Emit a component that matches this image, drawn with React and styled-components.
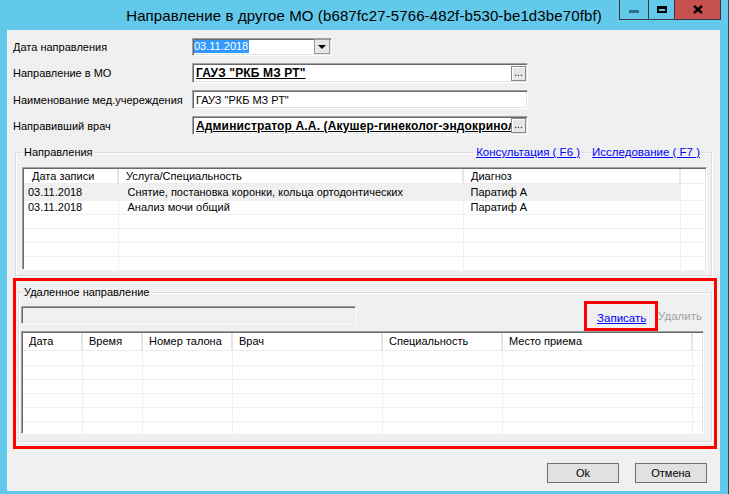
import React from 'react';
import styled, { createGlobalStyle } from 'styled-components';

const GlobalStyle = createGlobalStyle`
  html, body { margin: 0; padding: 0; background: #63c9eb; }
  body { font-family: "Liberation Sans", Arial, sans-serif; }
`;

// window chrome
const Window = styled.div`
  width: 729px;
  height: 494px;
  box-sizing: border-box;
  background: #63c9eb;
  border-right: 1px solid #2b4a57;
  display: flex;
  flex-direction: column;
`;

const TitleBar = styled.div`
  height: 30px;
  display: grid;
  grid-template-columns: 1fr auto 1fr;
  align-items: center;
`;

const Title = styled.div`
  grid-column: 2;
  font-size: 15px;
  letter-spacing: 0.12px;
  color: #000;
  white-space: nowrap;
  padding-top: 1px;
`;

const CaptionButtons = styled.div`
  grid-column: 3;
  justify-self: end;
  align-self: start;
  display: flex;
  height: 20px;
  margin-right: 7px;
  border: 1px solid #3a3a3a;
  border-top: none;
  box-sizing: border-box;
`;

const CapBtn = styled.div`
  width: ${p => p.$w}px;
  height: 100%;
  display: flex;
  align-items: center;
  justify-content: center;
  background: ${p => (p.$close ? '#c75050' : 'transparent')};
  border-left: ${p => (p.$first ? 'none' : '1px solid #3a3a3a')};
  box-sizing: border-box;
`;

const MinGlyph = styled.div`
  width: 10px;
  height: 3px;
  background: #2f6d88;
  margin-top: 4px;
`;

const MaxGlyph = styled.div`
  width: 10px;
  height: 7px;
  box-sizing: border-box;
  border: 2px solid #000;
  border-top-width: 3px;
`;

const Client = styled.div`
  margin: 0 8px 0 7px;
  height: 461px;
  background: #f0f0f0;
  display: flex;
  flex-direction: column;
  font-size: 11px;
  color: #000;
`;

// form rows
const Form = styled.div`
  display: flex;
  flex-direction: column;
  gap: 7px;
  padding: 7px 0 0 6px;
`;

const Row = styled.div`
  display: grid;
  grid-template-columns: 179px auto;
  align-items: center;
  height: ${p => p.$h}px;
`;

const Label = styled.div`
  white-space: nowrap;
`;

const Field = styled.div`
  width: ${p => p.$w}px;
  height: ${p => p.$h}px;
  box-sizing: border-box;
  background: ${p => (p.$disabled ? '#f0f0f0' : '#fff')};
  border: 1px solid;
  border-color: #a0a0a0 #fff #fff #a0a0a0;
  box-shadow: inset 1px 1px 0 #696969, inset -1px -1px 0 #e3e3e3;
  display: flex;
  align-items: center;
  padding-left: ${p => p.$pad ?? 3}px;
  margin-top: ${p => p.$mt || 0}px;
  overflow: hidden;
`;

const FieldText = styled.span`
  flex: 1;
  min-width: 0;
  white-space: nowrap;
  overflow: hidden;
  font-size: ${p => (p.$bold ? 12 : 11)}px;
  letter-spacing: ${p => (p.$bold ? 0.15 : 0)}px;
  font-weight: ${p => (p.$bold ? 'bold' : 'normal')};
  text-decoration: ${p => (p.$bold ? 'underline' : 'none')};
`;

const Selected = styled.span`
  background: #3399ff;
  color: #fff;
  line-height: 13px;
  padding-right: 1px;
`;

const Spacer = styled.div`
  flex: 1;
`;

const DropBtn = styled.div`
  width: 16px;
  height: 15px;
  box-sizing: border-box;
  background: #e6e6e6;
  border: 1px solid #9a9a9a;
  display: flex;
  align-items: center;
  justify-content: center;
  margin-right: 1px;
  &::after {
    content: '';
    border-left: 4px solid transparent;
    border-right: 4px solid transparent;
    border-top: 4px solid #000;
    margin-top: 1px;
  }
`;

const DotsBtn = styled.div`
  width: 15px;
  height: 15px;
  flex: none;
  box-sizing: border-box;
  background: #e6e6e6;
  border: 1px solid #8a8a8a;
  box-shadow: inset 1px 1px 0 #fff;
  font-size: 10px;
  line-height: 11px;
  text-align: center;
  margin-right: 1px;
  color: #000;
`;

// group boxes
const Group = styled.div`
  margin: ${p => p.$m};
  border: 1px solid #dcdcdc;
  box-shadow: inset 1px 1px 0 #fff, 1px 1px 0 #fff;
  display: flex;
  flex-direction: column;
  padding-bottom: ${p => p.$pb}px;
`;

const GroupHead = styled.div`
  display: flex;
  align-items: center;
  height: 14px;
  margin-top: -8px;
  padding: 0 ${p => p.$pr || 0}px 0 ${p => p.$pl}px;
`;

const Legend = styled.span`
  background: #f0f0f0;
  padding: 0 1px;
  white-space: nowrap;
`;

const LinkText = styled.span`
  background: #f0f0f0;
  font-size: 11.5px;
  padding: 0 ${p => p.$px ?? 1}px;
  margin-left: ${p => p.$ml || 0}px;
  color: ${p => (p.$disabled ? '#a0a0a0' : '#0000ff')};
  text-decoration: ${p => (p.$disabled ? 'none' : 'underline')};
  white-space: nowrap;
`;

// list views
const ListBox = styled.div`
  width: ${p => p.$w}px;
  height: 103px;
  box-sizing: border-box;
  margin: ${p => p.$m};
  background: #fff;
  border: 1px solid;
  border-color: #a0a0a0 #fff #fff #a0a0a0;
  box-shadow: inset 1px 1px 0 #696969, inset -1px -1px 0 #e3e3e3;
  padding: 1px;
  overflow: hidden;
`;

const Grid = styled.table`
  width: 100%;
  table-layout: fixed;
  border-collapse: collapse;
  font-size: 11px;
`;

const Col = styled.col`
  width: ${p => p.$w}px;
`;

const HeadRow = styled.tr`
  height: ${p => p.$h}px;
`;

const HeadCell = styled.th`
  font-weight: normal;
  text-align: left;
  padding: 0 0 0 ${p => p.$pl ?? 6}px;
  line-height: 12px;
  background: #fff;
  border-right: 2px solid #e5e5e5;
  border-bottom: 1px solid #ececec;
  white-space: nowrap;
  overflow: hidden;
  &:last-child { border-right: none; }
`;

const BodyRow = styled.tr`
  height: ${p => p.$h}px;
`;

const Cell = styled.td`
  padding: 0 0 0 ${p => p.$pl ?? 6}px;
  line-height: 12px;
  white-space: nowrap;
  overflow: hidden;
  border-right: 1px solid #f0f0f0;
  border-bottom: 1px solid #f0f0f0;
  background: ${p => (p.$sel ? '#f0f0f0' : '#fff')};
  &:last-child { border-right: none; }
`;

// highlighted area
const RedBox = styled.div`
  margin: 2px 0 0 6px;
  width: 704px;
  height: 171px;
  box-sizing: border-box;
  border: 3px solid #ff0000;
  display: flex;
  flex-direction: column;
`;

const Toolbar = styled.div`
  display: flex;
  align-items: flex-start;
  margin: 2px 9px 0 2px;
`;

const Actions = styled.div`
  margin-left: auto;
  display: flex;
  align-items: center;
`;

const Mark = styled.div`
  width: 74px;
  height: 30px;
  box-sizing: border-box;
  border: 3px solid #ff0000;
  display: flex;
  align-items: center;
  padding: 3px 0 0 10px;
`;

// bottom buttons
const Footer = styled.div`
  display: flex;
  justify-content: flex-end;
  gap: 16px;
  margin: 14px 13px 0 0;
`;

const Button = styled.div`
  width: 72px;
  height: 20px;
  box-sizing: border-box;
  background: #e1e1e1;
  border: 1px solid #707070;
  display: flex;
  align-items: center;
  justify-content: center;
`;

const directions = [
  { date: '03.11.2018', service: 'Снятие, постановка коронки, кольца ортодонтических', diag: 'Паратиф А' },
  { date: '03.11.2018', service: 'Анализ мочи общий', diag: 'Паратиф А' },
];

const App = () => {
  const rows1 = [17, 14, 14, 14, 14, 14];
  const rows2 = [15, 14, 14, 14, 14, 13];
  return (
    <Window>
      <GlobalStyle />
      <TitleBar>
        <Title>Направление в другое МО (b687fc27-5766-482f-b530-be1d3be70fbf)</Title>
        <CaptionButtons>
          <CapBtn $w={28} $first>
            <MinGlyph />
          </CapBtn>
          <CapBtn $w={26}>
            <MaxGlyph />
          </CapBtn>
          <CapBtn $w={46} $close>
            <svg width="10" height="9" viewBox="0 0 10 9">
              <path d="M1 1 L9 8 M9 1 L1 8" stroke="#000" strokeWidth="2.4" />
            </svg>
          </CapBtn>
        </CaptionButtons>
      </TitleBar>

      <Client>
        <Form>
          <Row $h={19}>
            <Label>Дата направления</Label>
            <Field $w={140} $h={18} $pad={1}>
              <Selected>03.11.2018</Selected>
              <Spacer />
              <DropBtn />
            </Field>
          </Row>
          <Row $h={20}>
            <Label>Направление в МО</Label>
            <Field $w={336} $h={20}>
              <FieldText $bold>ГАУЗ "РКБ МЗ РТ"</FieldText>
              <DotsBtn>...</DotsBtn>
            </Field>
          </Row>
          <Row $h={19}>
            <Label>Наименование мед.учереждения</Label>
            <Field $w={336} $h={19}>
              <FieldText>ГАУЗ "РКБ МЗ РТ"</FieldText>
            </Field>
          </Row>
          <Row $h={19}>
            <Label>Направивший врач</Label>
            <Field $w={336} $h={19}>
              <FieldText $bold>Администратор А.А. (Акушер-гинеколог-эндокринолог)</FieldText>
              <DotsBtn>...</DotsBtn>
            </Field>
          </Row>
        </Form>

        <Group $m="17px 8px 0 8px" $pb={5}>
          <GroupHead $pl={7} $pr={9}>
            <Legend>Направления</Legend>
            <Spacer />
            <LinkText $px={2}>Консультация ( F6 )</LinkText>
            <LinkText $px={2} $ml={8}>Исследование ( F7 )</LinkText>
          </GroupHead>
          <ListBox $w={685} $m="8px 0 0 6px">
            <Grid>
              <colgroup>
                <Col $w={94} />
                <Col $w={345} />
                <Col $w={217} />
                <Col />
              </colgroup>
              <thead>
                <HeadRow $h={14}>
                  <HeadCell $pl={8}>Дата записи</HeadCell>
                  <HeadCell $pl={7}>Услуга/Специальность</HeadCell>
                  <HeadCell $pl={7}>Диагноз</HeadCell>
                  <HeadCell />
                </HeadRow>
              </thead>
              <tbody>
                {rows1.map((h, i) => {
                  const d = directions[i];
                  return (
                    <BodyRow key={i} $h={h}>
                      <Cell $pl={4} $sel={i === 0}>{d ? d.date : ''}</Cell>
                      <Cell $pl={9} $sel={i === 0}>{d ? d.service : ''}</Cell>
                      <Cell $pl={7} $sel={i === 0}>{d ? d.diag : ''}</Cell>
                      <Cell />
                    </BodyRow>
                  );
                })}
              </tbody>
            </Grid>
          </ListBox>
        </Group>

        <RedBox>
          <Group $m="11px 2px 0 2px" $pb={7}>
            <GroupHead $pl={4}>
              <Legend>Удаленное направление</Legend>
            </GroupHead>
            <Toolbar>
              <Field $w={335} $h={18} $mt={5} $disabled />
              <Actions>
                <Mark>
                  <LinkText $px={0}>Записать</LinkText>
                </Mark>
                <LinkText $disabled $px={0}>Удалить</LinkText>
              </Actions>
            </Toolbar>
            <ListBox $w={683} $m="0 0 0 2px">
              <Grid>
                <colgroup>
                  <Col $w={59} />
                  <Col $w={60} />
                  <Col $w={90} />
                  <Col $w={150} />
                  <Col $w={120} />
                  <Col $w={190} />
                  <Col />
                </colgroup>
                <thead>
                  <HeadRow $h={17}>
                    <HeadCell $pl={6}>Дата</HeadCell>
                    <HeadCell>Время</HeadCell>
                    <HeadCell>Номер талона</HeadCell>
                    <HeadCell>Врач</HeadCell>
                    <HeadCell>Специальность</HeadCell>
                    <HeadCell>Место приема</HeadCell>
                    <HeadCell />
                  </HeadRow>
                </thead>
                <tbody>
                  {rows2.map((h, i) => (
                    <BodyRow key={i} $h={h}>
                      <Cell />
                      <Cell />
                      <Cell />
                      <Cell />
                      <Cell />
                      <Cell />
                      <Cell />
                    </BodyRow>
                  ))}
                </tbody>
              </Grid>
            </ListBox>
          </Group>
        </RedBox>

        <Footer>
          <Button>Ok</Button>
          <Button>Отмена</Button>
        </Footer>
      </Client>
    </Window>
  );
};

export default App;
